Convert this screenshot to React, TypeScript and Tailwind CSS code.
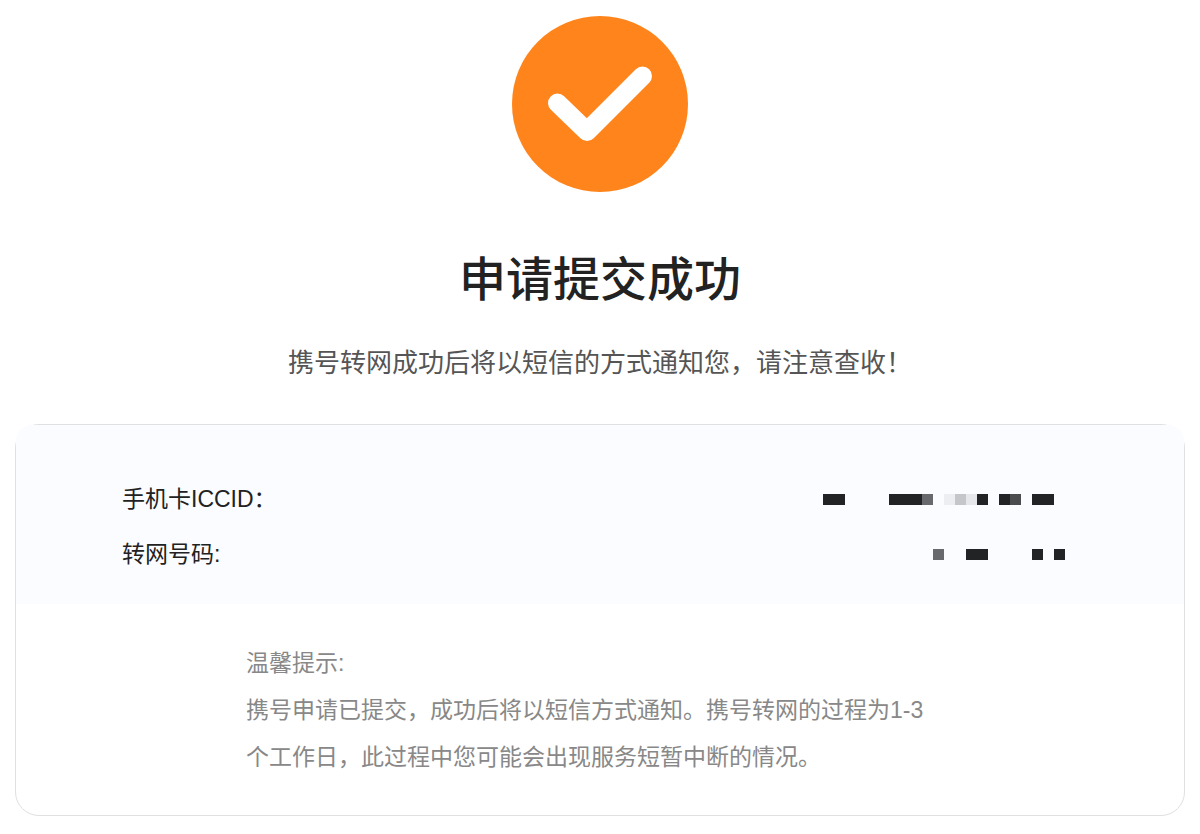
function SuccessIcon() {
  return (
    <svg viewBox="0 0 176 176" className="size-44" aria-hidden="true">
      <circle cx="88" cy="88" r="88" fill="#ff841b" />
      <path
        d="M45.500 87 L75 115.500 L130.500 60"
        fill="none"
        stroke="#fff"
        strokeWidth="19"
        strokeLinecap="round"
        strokeLinejoin="round"
      />
    </svg>
  );
}

type Block = { at: number; span: number; color: string };

const CELL = 11;

// Masked values, one entry per run of filled cells
const iccidMask: Block[] = [
  { at: 0, span: 2, color: '#212325' },
  { at: 6, span: 3, color: '#212325' },
  { at: 9, span: 1, color: '#68696d' },
  { at: 11, span: 1, color: '#edeef1' },
  { at: 12, span: 1, color: '#c5c6c9' },
  { at: 13, span: 1, color: '#e6e7ea' },
  { at: 14, span: 1, color: '#212325' },
  { at: 16, span: 1, color: '#212325' },
  { at: 17, span: 1, color: '#4b4c4e' },
  { at: 19, span: 2, color: '#212325' },
];

const numberMask: Block[] = [
  { at: 0, span: 1, color: '#68696d' },
  { at: 3, span: 2, color: '#212325' },
  { at: 9, span: 1, color: '#212325' },
  { at: 11, span: 1, color: '#212325' },
];

function MaskedValue({ blocks, cells }: { blocks: Block[]; cells: number }) {
  return (
    <svg width={cells * CELL} height={CELL} shapeRendering="crispEdges" aria-hidden="true">
      {blocks.map((b) => (
        <rect key={b.at} x={b.at * CELL} width={b.span * CELL} height={CELL} fill={b.color} />
      ))}
    </svg>
  );
}

export default function App() {
  return (
    <main className="flex flex-col items-center bg-white px-[15px] py-4 font-['Liberation_Sans','Noto_Sans_CJK_SC',sans-serif]">
      <SuccessIcon />
      <h1 className="mt-14 text-[47px] leading-16 font-medium text-[#222]">申请提交成功</h1>
      <p className="mt-[31px] text-[26px] leading-10 text-[#555]">携号转网成功后将以短信的方式通知您，请注意查收！</p>

      <section className="mt-[41px] w-full rounded-3xl border border-[#e0e0e0]">
        <dl className="space-y-[15px] rounded-t-2xl bg-[#fbfcff] pt-[54px] pr-[119px] pb-[30px] pl-[106px] text-[23px] leading-10 text-[#222]">
          <div className="flex items-center justify-between">
            <dt>手机卡ICCID：</dt>
            <dd>
              <MaskedValue blocks={iccidMask} cells={22} />
            </dd>
          </div>
          <div className="flex items-center justify-between">
            <dt>转网号码:</dt>
            <dd>
              <MaskedValue blocks={numberMask} cells={12} />
            </dd>
          </div>
        </dl>
        <div className="mx-auto max-w-[708px] pt-9 pr-4 pb-[34px] text-[23px] leading-[47px] text-[#888]">
          <h2>温馨提示:</h2>
          <p>携号申请已提交，成功后将以短信方式通知。携号转网的过程为1-3个工作日，此过程中您可能会出现服务短暂中断的情况。</p>
        </div>
      </section>
    </main>
  );
}
